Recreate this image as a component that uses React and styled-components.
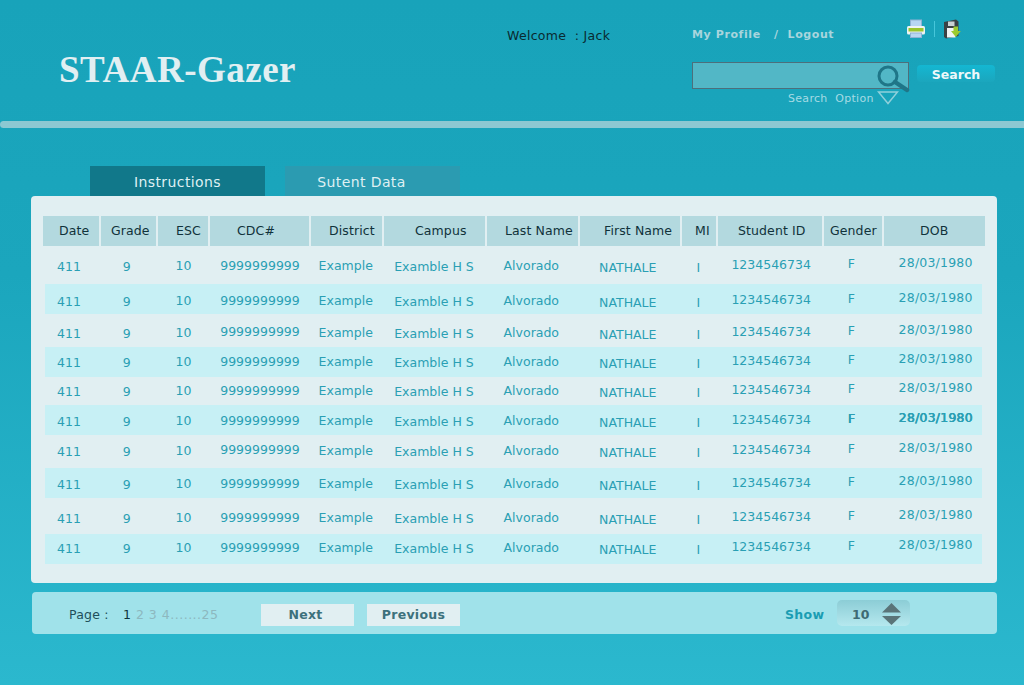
import React from 'react'
import styled, { createGlobalStyle } from 'styled-components'

const columns = [
  { title: 'Date', w: 58, head: 16, cell: 12, lift: 0, text: '411' },
  { title: 'Grade', w: 57, head: 10, cell: 20, lift: 0, text: '9' },
  { title: 'ESC', w: 52, head: 18, cell: 16, lift: 1, text: '10' },
  { title: 'CDC#', w: 101, head: 27, cell: 9, lift: 1.5, text: '9999999999' },
  { title: 'District', w: 73, head: 18, cell: 7, lift: 1, text: 'Example' },
  { title: 'Campus', w: 103, head: 31, cell: 10, lift: 0, text: 'Examble H S' },
  { title: 'Last Name', w: 93, head: 18, cell: 17, lift: 1, text: 'Alvorado' },
  { title: 'First Name', w: 102, head: 24, cell: 20, lift: -1, text: 'NATHALE' },
  { title: 'MI', w: 36, head: 13, cell: 16, lift: -1, text: 'I' },
  { title: 'Student ID', w: 106, head: 20, cell: 15, lift: 2, text: '1234546734' },
  { title: 'Gender', w: 60, head: 6, cell: 26, lift: 3, text: 'F' },
  { title: 'DOB', w: 101, head: 36, cell: 17, lift: 4, text: '28/03/1980', spaced: true },
]

const rows = [
  { h: 38, striped: false, shift: 2 },
  { h: 30, striped: true, shift: 3 },
  { h: 33, striped: false, shift: 3 },
  { h: 30, striped: true, shift: 1 },
  { h: 28, striped: false, shift: 1 },
  { h: 30, striped: true, shift: 2, heavy: true },
  { h: 33, striped: false, shift: 0 },
  { h: 30, striped: true, shift: 2 },
  { h: 36, striped: false, shift: 3 },
  { h: 30, striped: true, shift: 0 },
]

const GlobalStyle = createGlobalStyle`
  html, body {
    margin: 0;
    padding: 0;
    background: #2bb7cd;
  }
  body {
    font-family: "DejaVu Sans", Verdana, sans-serif;
  }
`

const Page = styled.div`
  width: 1024px;
  height: 685px;
  overflow: hidden;
  background: linear-gradient(#18a3ba 0%, #1ba6bd 40%, #2bb8ce 100%);
`

const Header = styled.header`
  height: 121px;
  display: flex;
  position: relative;
`

const Logo = styled.h1`
  margin: 0;
  padding: 48px 0 0 59px;
  width: 507px;
  box-sizing: border-box;
  font-family: "Liberation Serif", "Times New Roman", serif;
  font-size: 37px;
  line-height: 44px;
  font-weight: 700;
  letter-spacing: 0.5px;
  color: #e1eff2;
`

const Welcome = styled.div`
  width: 185px;
  padding-top: 28px;
  font-size: 12.5px;
  line-height: 16px;
  letter-spacing: 0.3px;
  color: #0a2a30;
  white-space: pre;
`

const TopRight = styled.div`
  flex: 1;
  display: flex;
  flex-direction: column;
`

const UserRow = styled.div`
  height: 62px;
  display: flex;
  justify-content: space-between;
`

const UserLinks = styled.div`
  padding-top: 28px;
  font-size: 11px;
  line-height: 14px;
  font-weight: 700;
  letter-spacing: 0.6px;
  color: #a9d5dd;
  white-space: pre;
`

const Tools = styled.div`
  display: flex;
  align-items: center;
  height: 20px;
  margin: 19px 63px 0 0;
  gap: 8px;
`

const ToolDivider = styled.span`
  width: 1px;
  height: 16px;
  background: #46c6da;
`

const SearchRow = styled.div`
  display: flex;
  gap: 8px;
`

const SearchField = styled.div`
  position: relative;
  width: 217px;
  height: 27px;
  box-sizing: border-box;
  border: 1px solid #4d6f7b;
  background: #52b7c6;
`

const Lens = styled.svg`
  position: absolute;
  right: -2px;
  top: 2px;
`

const SearchButton = styled.button`
  width: 78px;
  height: 17px;
  margin-top: 3px;
  padding: 0;
  border: 0;
  border-radius: 4px;
  background: linear-gradient(#14b7d2, #1ba6bd);
  color: #eef8fa;
  font: 700 12.5px/19px "DejaVu Sans", Verdana, sans-serif;
`

const OptionRow = styled.div`
  display: flex;
  align-items: center;
  gap: 3px;
  height: 18px;
  margin-left: 96px;
  font-size: 11px;
  letter-spacing: 0.3px;
  color: #a5dbe4;
  white-space: pre;
`

const Rule = styled.div`
  height: 7px;
  border-radius: 4px 0 0 4px;
  background: #8cc8d2;
`

const Tabs = styled.nav`
  display: flex;
  gap: 20px;
  height: 30px;
  margin-top: 38px;
  padding-left: 90px;
`

const Tab = styled.div`
  box-sizing: border-box;
  width: 175px;
  padding-right: ${p => p.$inset || 0}px;
  text-align: center;
  font-size: 14px;
  line-height: 32px;
  letter-spacing: 0.4px;
  color: #dff0f3;
  background: ${p => (p.$active ? '#11788a' : '#2b9bb1')};
`

const Panel = styled.main`
  width: 966px;
  height: 387px;
  margin-left: 31px;
  padding: 20px 12px 0;
  box-sizing: border-box;
  border-radius: 4px;
  background: #e1eff2;
`

const HeadRow = styled.div`
  display: flex;
  height: 30px;
`

const HeadCell = styled.div`
  box-sizing: border-box;
  width: ${p => p.$w}px;
  padding-left: ${p => p.$pad}px;
  border-right: 2px solid #e1eff2;
  background: #b3d9df;
  font-size: 12.5px;
  line-height: 29px;
  letter-spacing: 0.1px;
  color: #10323a;
  white-space: pre;
  &:last-child {
    border-right: 0;
  }
`

const Row = styled.div`
  display: flex;
  align-items: center;
  height: ${p => p.$h}px;
  width: 937px;
  margin-left: 2px;
  background: ${p => (p.$striped ? '#c7f0f5' : 'transparent')};
`

const Cell = styled.div`
  box-sizing: border-box;
  width: ${p => p.$w}px;
  padding-left: ${p => p.$pad}px;
  padding-bottom: ${p => Math.max(p.$lift, 0) * 2}px;
  padding-top: ${p => Math.max(-p.$lift, 0) * 2}px;
  font-size: 12.5px;
  line-height: 16px;
  letter-spacing: ${p => (p.$spaced ? '0.2px' : '0')};
  color: #2a9fb4;
  white-space: pre;
  text-shadow: ${p => (p.$heavy ? '0.5px 0 0 #2a9fb4, 0 0.4px 0 #2a9fb4' : 'none')};
`

const Pager = styled.footer`
  display: flex;
  align-items: center;
  width: 965px;
  height: 42px;
  margin: 9px 0 0 32px;
  padding-left: 37px;
  box-sizing: border-box;
  border-radius: 4px;
  background: #a0e2ea;
`

const PageLabel = styled.span`
  width: 54px;
  padding-top: 2px;
  font-size: 12.5px;
  letter-spacing: 0.2px;
  color: #214f5a;
  white-space: pre;
`

const PageNumbers = styled.span`
  width: 138px;
  padding-top: 2px;
  font-size: 12.5px;
  letter-spacing: 0.5px;
  color: #8db8bf;
  white-space: pre;
  b {
    font-weight: 400;
    color: #10323a;
  }
`

const PagerButton = styled.button`
  width: 93px;
  height: 22px;
  margin: 4px 13px 0 0;
  padding: 0 ${p => p.$inset || 0}px 0 0;
  border: 0;
  background: #e1eff2;
  color: #3d717c;
  font: 700 12.5px/22px "DejaVu Sans", Verdana, sans-serif;
  letter-spacing: 0.3px;
`

const ShowLabel = styled.span`
  margin-left: 312px;
  width: 52px;
  padding-top: 2px;
  font-size: 12.5px;
  font-weight: 700;
  letter-spacing: 0.3px;
  color: #1a9db3;
`

const Stepper = styled.div`
  display: flex;
  align-items: center;
  justify-content: space-between;
  width: 73px;
  height: 26px;
  padding: 2px 9px 0 15px;
  box-sizing: border-box;
  border-radius: 5px;
  background: linear-gradient(#8ccdd6, #b5e8ee);
  font-size: 12.5px;
  font-weight: 700;
  color: #3e6a73;
`

function PrinterIcon() {
  return (
    <svg width="20" height="20" viewBox="0 0 20 20">
      <rect x="4.5" y="1" width="11" height="8" fill="#b8d6f2" stroke="#8fb2d4" />
      <rect x="1" y="7" width="18" height="8.5" rx="1.5" fill="#eef3f2" />
      <rect x="2.5" y="9" width="15" height="3.5" fill="#9bc52d" />
      <rect x="4.5" y="14" width="11" height="4.5" fill="#b8d6f2" stroke="#8fb2d4" />
    </svg>
  )
}

function DiskIcon() {
  return (
    <svg width="18" height="20" viewBox="0 0 18 20">
      <path d="M1 3 L13 0.5 L15.5 2.5 V17 L3 19.5 L1 18 Z" fill="#3a4144" />
      <rect x="5" y="2.5" width="6.5" height="4.5" fill="#c9d1d3" />
      <rect x="4" y="9" width="8.5" height="9.5" fill="#f2f4f4" />
      <path d="M10.5 7.5 H15 V12 H17.8 L12.8 18 L8 12 H10.5 Z" fill="#9ccb2e" />
    </svg>
  )
}

function Stepper10() {
  return (
    <Stepper>
      10
      <svg width="19" height="22" viewBox="0 0 19 22">
        <path d="M9.5 0 L19 9.5 H0 Z" fill="#5a7478" />
        <path d="M0 13 H19 L9.5 22 Z" fill="#5a7478" />
      </svg>
    </Stepper>
  )
}

export default function App() {
  return (
    <Page>
      <GlobalStyle />
      <Header>
        <Logo>STAAR-Gazer</Logo>
        <Welcome>Welcome  : Jack</Welcome>
        <TopRight>
          <UserRow>
            <UserLinks>My Profile   /  Logout</UserLinks>
            <Tools>
              <PrinterIcon />
              <ToolDivider />
              <DiskIcon />
            </Tools>
          </UserRow>
          <SearchRow>
            <SearchField>
              <Lens width="34" height="28" viewBox="0 0 34 28">
                <circle cx="12" cy="11" r="9" fill="none" stroke="#1f7688" strokeWidth="3" />
                <path d="M19 17 L31 25" stroke="#1f7688" strokeWidth="4.5" strokeLinecap="round" />
              </Lens>
            </SearchField>
            <SearchButton>Search</SearchButton>
          </SearchRow>
          <OptionRow>
            Search  Option
            <svg width="22" height="14" viewBox="0 0 22 14">
              <path d="M1.5 1 H20.5 L11 12.5 Z" fill="none" stroke="#8fd0db" strokeWidth="1.5" />
            </svg>
          </OptionRow>
        </TopRight>
      </Header>
      <Rule />
      <Tabs>
        <Tab $active>Instructions</Tab>
        <Tab $inset={22}>Sutent Data</Tab>
      </Tabs>
      <Panel>
        <HeadRow>
          {columns.map(c => (
            <HeadCell key={c.title} $w={c.w} $pad={c.head}>{c.title}</HeadCell>
          ))}
        </HeadRow>
        {rows.map((r, i) => (
          <Row key={i} $h={r.h} $striped={r.striped}>
            {columns.map(c => (
              <Cell
                key={c.title}
                $w={c.w}
                $pad={c.cell}
                $lift={c.lift - r.shift}
                $spaced={c.spaced}
                $heavy={r.heavy && (c.title === 'Gender' || c.title === 'DOB')}
              >
                {c.text}
              </Cell>
            ))}
          </Row>
        ))}
      </Panel>
      <Pager>
        <PageLabel>Page :</PageLabel>
        <PageNumbers><b>1</b> 2 3 4.......25</PageNumbers>
        <PagerButton $inset={4}>Next</PagerButton>
        <PagerButton>Previous</PagerButton>
        <ShowLabel>Show</ShowLabel>
        <Stepper10 />
      </Pager>
    </Page>
  )
}
